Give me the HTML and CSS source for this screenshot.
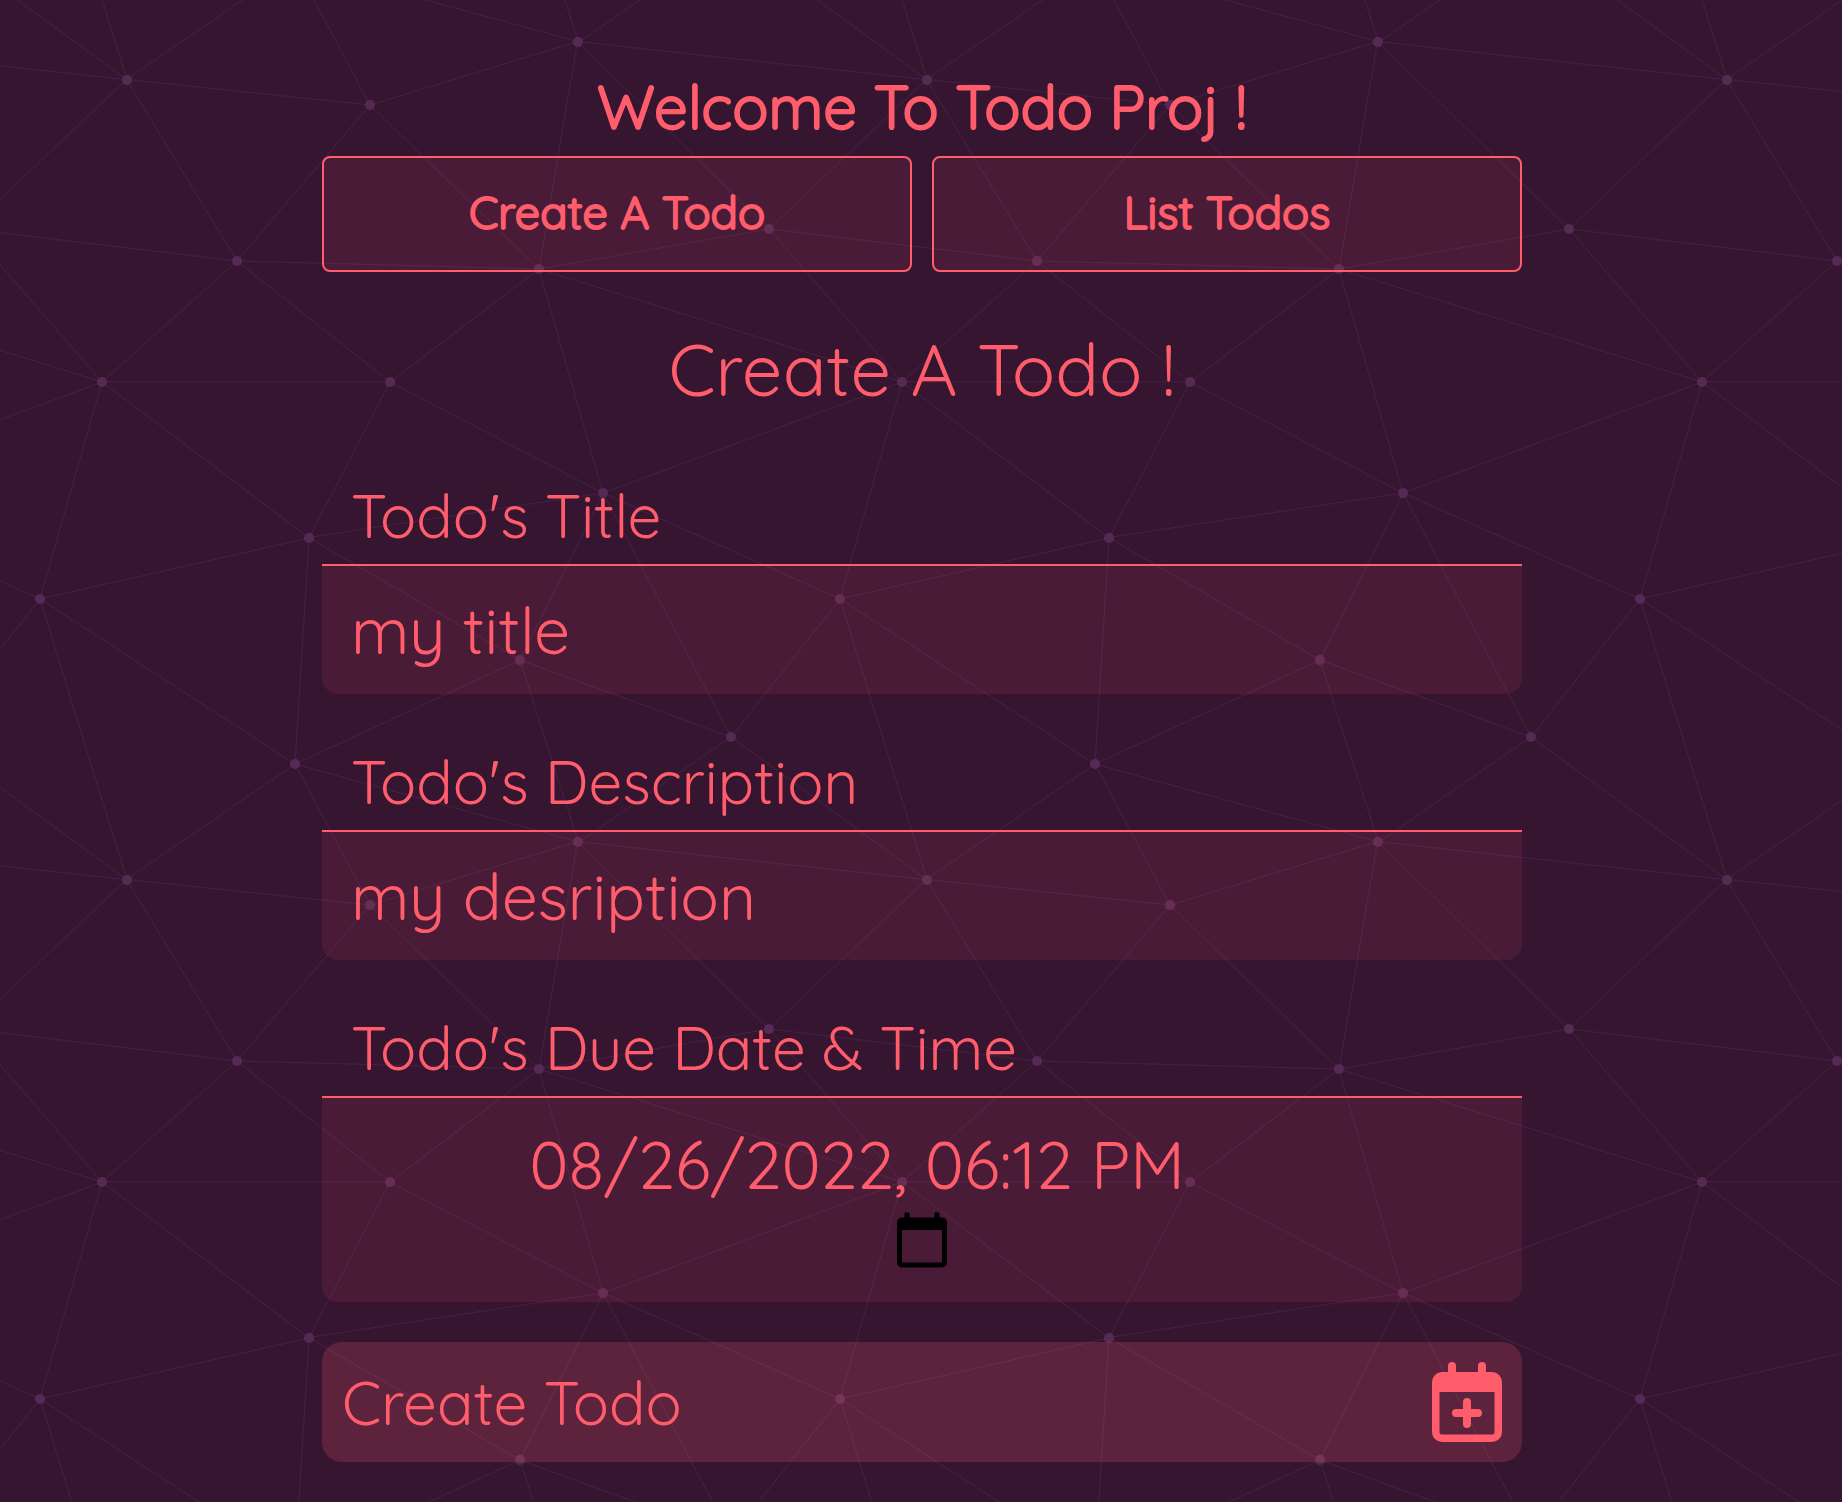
FILE: index.html
```html
<!DOCTYPE html>
<html lang="en">
<head>
<meta charset="utf-8">
<meta name="viewport" content="width=device-width, initial-scale=1">
<title>Todo Proj</title>
<link rel="stylesheet" href="styles.css">
</head>
<body>
<main class="page">
  <h1 class="page-title">Welcome To Todo Proj !</h1>
  <nav class="tabs">
    <button class="tab" type="button">Create A Todo</button>
    <button class="tab" type="button">List Todos</button>
  </nav>
  <h2 class="form-title">Create A Todo !</h2>
  <form class="form">
    <div class="field">
      <label class="label" for="title">Todo's Title</label>
      <input class="input" id="title" type="text" value="my title">
    </div>
    <div class="field">
      <label class="label" for="description">Todo's Description</label>
      <input class="input" id="description" type="text" value="my desription">
    </div>
    <div class="field">
      <label class="label" for="due">Todo's Due Date &amp; Time</label>
      <div class="date-box">
        <input class="date-input" id="due" type="text" value="08/26/2022, 06:12 PM">
        <button class="picker" type="button" aria-label="Open calendar">
          <svg class="picker-icon" viewBox="0 0 50 55" aria-hidden="true"><path fill-rule="evenodd" d="M7.500 0h5v5h25V0h5v5H45a5 5 0 0 1 5 5v40a5 5 0 0 1-5 5H5a5 5 0 0 1-5-5V10a5 5 0 0 1 5-5h2.500zM5 17.500V50h40V17.500z"/></svg>
        </button>
      </div>
    </div>
    <button class="submit" type="submit">
      <span>Create Todo</span>
      <svg class="submit-icon" viewBox="0 0 70 80" aria-hidden="true"><path fill-rule="evenodd" d="M16 4a4 4 0 0 1 8 0v6h22V4a4 4 0 0 1 8 0v6h6a10 10 0 0 1 10 10v50a10 10 0 0 1-10 10H10A10 10 0 0 1 0 70V20a10 10 0 0 1 10-10h6zM7.500 30v40a2.500 2.500 0 0 0 2.500 2.500h50a2.500 2.500 0 0 0 2.500-2.500V30z"/><path class="submit-plus" d="M35 40v22M24 51h22"/></svg>
    </button>
  </form>
</main>
</body>
</html>
```
FILE: styles.css
```css
:root {
  --accent: #ff5d6c;
  --panel: rgba(255, 93, 108, 0.1);
  --panel-strong: rgba(255, 93, 108, 0.2);
}

* {
  box-sizing: border-box;
}

body {
  margin: 0;
  min-height: 100vh;
  color: var(--accent);
  font-family: Quicksand, Lato, sans-serif;
  font-weight: 400;
  background-color: #361530;
  background-image: url("data:image/svg+xml,%3Csvg xmlns='http://www.w3.org/2000/svg' width='800' height='800' viewBox='0 0 800 800'%3E%3Cg fill='none' stroke='%23432044' stroke-width='1'%3E%3Cpath d='M769 229L1037 260.9M927 880L731 737 520 660 309 538 40 599 295 764 126.5 879.5 40 599-197 493 102 382-31 229 126.5 79.5-69-63'/%3E%3Cpath d='M-31 229L237 261 390 382 603 493 308.5 537.5 101.5 381.5M370 905L295 764'/%3E%3Cpath d='M520 660L578 842 731 737 840 599 603 493 520 660 295 764 309 538 390 382 539 269 769 229 577.5 41.5 370 105 295 -36 126.5 79.5 237 261 102 382 40 599 -69 737 127 880'/%3E%3Cpath d='M520-140L578.5 42.5 731-63M603 493L539 269 237 261 370 105M902 382L539 269M390 382L102 382'/%3E%3Cpath d='M-222 42L126.5 79.5 370 105 539 269 577.5 41.5 927 80 769 229 902 382 603 493 731 737M295-36L577.5 41.5M578 842L295 764M40-201L127 80M102 382L-261 269'/%3E%3C/g%3E%3Cg fill='%23552a55'%3E%3Ccircle cx='769' cy='229' r='5'/%3E%3Ccircle cx='539' cy='269' r='5'/%3E%3Ccircle cx='603' cy='493' r='5'/%3E%3Ccircle cx='731' cy='737' r='5'/%3E%3Ccircle cx='520' cy='660' r='5'/%3E%3Ccircle cx='309' cy='538' r='5'/%3E%3Ccircle cx='295' cy='764' r='5'/%3E%3Ccircle cx='40' cy='599' r='5'/%3E%3Ccircle cx='102' cy='382' r='5'/%3E%3Ccircle cx='127' cy='80' r='5'/%3E%3Ccircle cx='370' cy='105' r='5'/%3E%3Ccircle cx='578' cy='42' r='5'/%3E%3Ccircle cx='237' cy='261' r='5'/%3E%3Ccircle cx='390' cy='382' r='5'/%3E%3C/g%3E%3C/svg%3E");
}

button,
input {
  margin: 0;
  border: 0;
  padding: 0;
  background: none;
  color: inherit;
  font: inherit;
}

.page {
  display: flex;
  flex-direction: column;
  max-width: 1242px;
  margin: 0 auto;
  padding: 67px 20px 40px 22px;
}

.page-title {
  margin: 0 0 9px;
  font-size: 60px;
  font-weight: 400;
  line-height: 80px;
  text-align: center;
  -webkit-text-stroke: 2px currentColor;
}

.tabs {
  display: grid;
  grid-template-columns: 1fr 1fr;
  gap: 20px;
}

.tab {
  height: 116px;
  padding-bottom: 4px;
  border: 2px solid var(--accent);
  border-radius: 8px;
  background: var(--panel);
  font-size: 45px;
  -webkit-text-stroke: 2px currentColor;
}

.form-title {
  margin: 53px 0 55px;
  font-size: 72px;
  font-weight: 400;
  line-height: 88px;
  text-align: center;
}

.form {
  display: flex;
  flex-direction: column;
  gap: 40px;
}

.field {
  display: flex;
  flex-direction: column;
}

.label {
  padding: 10px 29px;
  font-size: 60px;
  line-height: 76px;
}

.input {
  width: 100%;
  height: 130px;
  padding: 0 29px;
  border-top: 2px solid var(--accent);
  border-radius: 0 0 16px 16px;
  background: var(--panel);
  font-size: 64px;
}

.date-box {
  display: flex;
  flex-direction: column;
  align-items: center;
  padding: 26px 30px 34px;
  border-top: 2px solid var(--accent);
  border-radius: 0 0 16px 16px;
  background: var(--panel);
}

.date-input {
  width: 100%;
  height: 80px;
  padding-right: 130px;
  font-size: 66px;
  text-align: center;
}

.picker {
  display: flex;
  margin-top: 8px;
  color: #000;
}

.picker-icon {
  width: 50px;
  height: 56px;
  fill: currentColor;
}

.submit {
  display: flex;
  align-items: center;
  justify-content: space-between;
  height: 120px;
  padding: 0 20px;
  border-radius: 20px;
  background: var(--panel-strong);
  font-size: 60px;
}

.submit-icon {
  width: 70px;
  height: 80px;
  fill: currentColor;
}

.submit-plus {
  fill: none;
  stroke: currentColor;
  stroke-width: 8;
  stroke-linecap: round;
}
```
